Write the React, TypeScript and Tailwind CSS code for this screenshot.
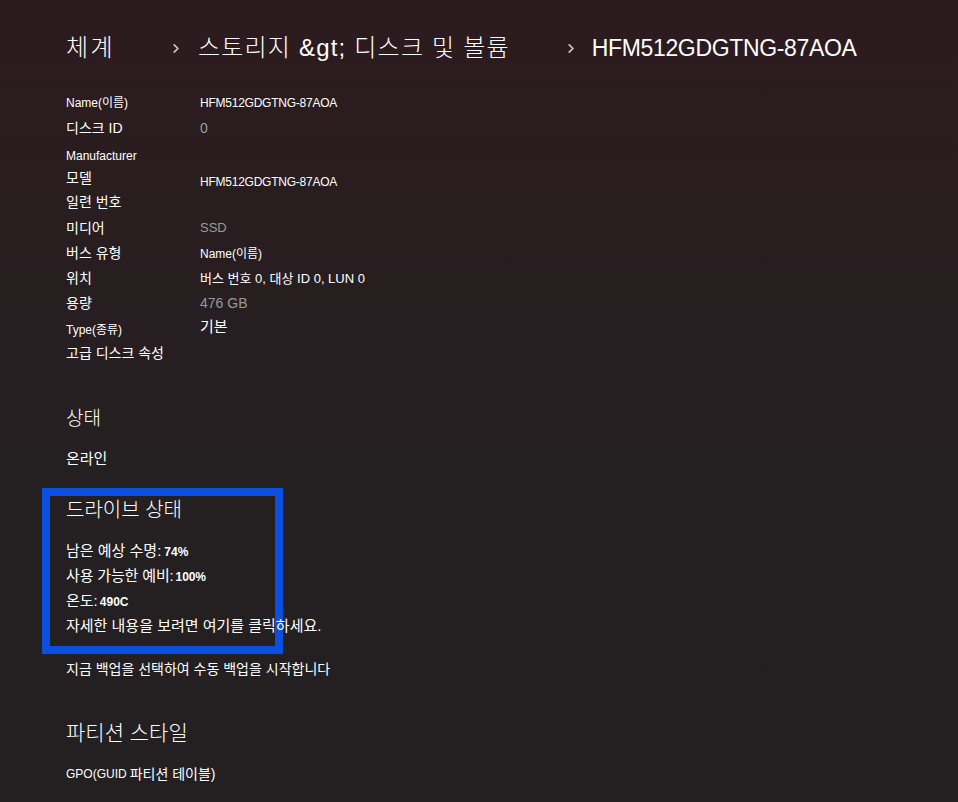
import type { ReactNode } from "react";

const font = "font-['Liberation_Sans','Noto_Sans_CJK_KR',sans-serif]";

type Row = {
  label: ReactNode;
  value?: ReactNode;
  h: string;
};

const model = <span className="text-[12px] tracking-[-0.02em]">HFM512GDGTNG-87AOA</span>;

const rows: Row[] = [
  { label: <span className="text-[12px]">Name(이름)</span>, value: model, h: "h-[25px]" },
  { label: <span className="text-[14px]">디스크 ID</span>, value: <span className="text-[14px] text-[#9a9a9a]">0</span>, h: "h-[27px]" },
  { label: <span className="text-[12px]">Manufacturer</span>, h: "h-[28px]" },
  { label: <span className="text-[14px] -mt-[3px]">모델</span>, value: <span className="mt-[3px]">{model}</span>, h: "h-[19px]" },
  { label: <span className="text-[14px]">일련 번호</span>, h: "h-[26px]" },
  { label: <span className="text-[14px]">미디어</span>, value: <span className="text-[13px] text-[#9a9a9a]">SSD</span>, h: "h-[26px]" },
  { label: <span className="text-[14px]">버스 유형</span>, value: <span className="text-[12px]">Name(이름)</span>, h: "h-[25px]" },
  {
    label: <span className="text-[14px]">위치</span>,
    value: <span className="text-[13px]">버스 번호 0, 대상 ID 0, LUN 0</span>,
    h: "h-[25px]",
  },
  { label: <span className="text-[14px]">용량</span>, value: <span className="text-[14px] text-[#9a9a9a]">476 GB</span>, h: "h-[25px]" },
  {
    label: <span className="mt-[3px] text-[12px]">Type(종류)</span>,
    value: <span className="-mt-[3px] text-[15px]">기본</span>,
    h: "h-[25px]",
  },
  { label: <span className="text-[14px]">고급 디스크 속성</span>, h: "h-[25px]" },
];

function Chevron() {
  return (
    <svg viewBox="0 0 8 12" className="h-[11px] w-[8px] text-[#c8c8c8]" fill="none">
      <polyline points="1.5,1.5 6,6 1.5,10.5" stroke="currentColor" strokeWidth="1.8" />
    </svg>
  );
}

export default function App() {
  return (
    <div className={`min-h-screen bg-gradient-to-b from-[#2c1b1e] via-[#251f21] to-[#232022] px-[66px] text-white ${font}`}>
      <header className="flex h-[90px] items-center pt-[6px]">
        <span className="text-[24px] font-light tracking-[0.1em]">체계</span>
        <span className="ml-[57px]">
          <Chevron />
        </span>
        <span className="ml-[18px] text-[24px] font-light tracking-[0.05em]">스토리지 &amp;gt; 디스크 및 볼륨</span>
        <span className="ml-[57px]">
          <Chevron />
        </span>
        <span className="ml-[17px] text-[23px] tracking-[-0.015em]">HFM512GDGTNG-87AOA</span>
      </header>

      <section>
        {rows.map((row, i) => (
          <div key={i} className={`flex items-center ${row.h}`}>
            <div className="flex w-[134px] items-center">{row.label}</div>
            <div className="flex items-center">{row.value}</div>
          </div>
        ))}
      </section>

      <h2 className="mt-[33px] flex h-[40px] items-center text-[19px] font-light">상태</h2>
      <p className="mt-[8px] flex h-[24px] items-center text-[15px]">온라인</p>

      <section className="relative mt-[17px] h-[166px] pt-[7px]">
        <div className="pointer-events-none absolute -left-[24px] top-0 h-[166px] w-[241px] border-[8px] border-[#0b4fe0]" />
        <h2 className="relative flex h-[30px] items-center text-[20px] font-light">드라이브 상태</h2>
        <div className="relative mt-[14px]">
          <p className="flex h-[25px] items-center text-[15px]">
            남은 예상 수명:<span className="ml-[3px] text-[12px] font-bold">74%</span>
          </p>
          <p className="flex h-[25px] items-center text-[15px] tracking-[-0.01em]">
            사용 가능한 예비:<span className="ml-[2px] text-[12px] font-bold">100%</span>
          </p>
          <p className="flex h-[25px] items-center text-[15px]">
            온도:<span className="ml-[2px] text-[12px] font-bold">490C</span>
          </p>
          <p className="flex h-[25px] items-center whitespace-nowrap text-[15px]">자세한 내용을 보려면 여기를 클릭하세요.</p>
        </div>
      </section>

      <p className="mt-[3px] flex h-[24px] items-center text-[14px]">지금 백업을 선택하여 수동 백업을 시작합니다</p>

      <h2 className="mt-[34px] flex h-[36px] items-center text-[21px] font-light">파티션 스타일</h2>
      <p className="mt-[11px] flex h-[24px] items-center text-[12px]">
        GPO(GUID <span className="ml-[3px] text-[14px]">파티션 테이블)</span>
      </p>
    </div>
  );
}
